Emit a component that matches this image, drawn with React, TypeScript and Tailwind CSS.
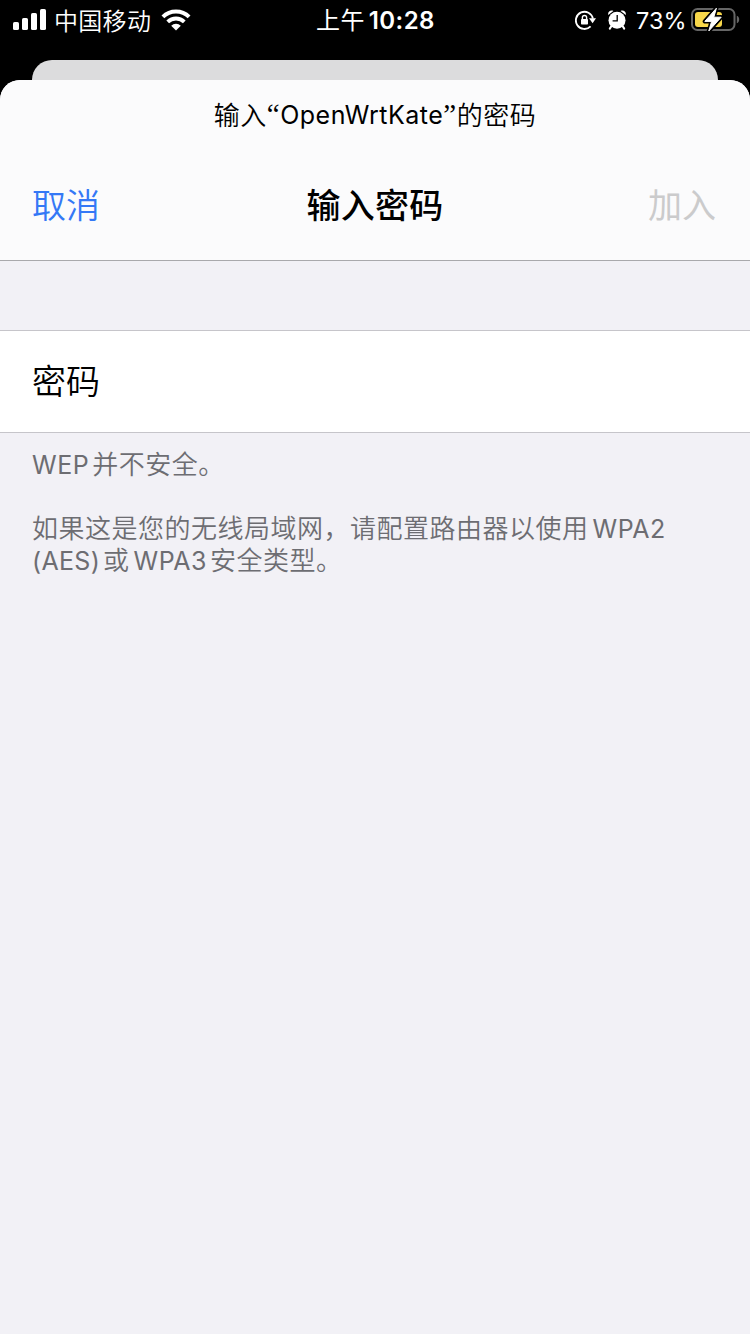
import type { ReactNode } from "react";

const cjk = "font-['Noto_Sans_CJK_SC',sans-serif]";
const latin = "font-['Inter','Noto_Sans_CJK_SC',sans-serif]";

function Latin({ className = "", children }: { className?: string; children: ReactNode }) {
  return <span className={`${latin} ${className}`}>{children}</span>;
}

function SignalBars() {
  return (
    <svg className="ml-[13px] block h-[22px] w-[33px] shrink-0" viewBox="0 0 33 22" fill="#fff">
      <rect x="0" y="13" width="6" height="8" rx="1.6" />
      <rect x="9" y="9" width="6" height="12" rx="1.6" />
      <rect x="18" y="4" width="6" height="17" rx="1.6" />
      <rect x="27" y="0" width="6" height="21" rx="1.6" />
    </svg>
  );
}

function WifiIcon() {
  return (
    <svg className="ml-[10px] block h-[22px] w-[30px] shrink-0" viewBox="0 0 30 22" fill="none">
      <path d="M1.9 7.9a18.6 18.6 0 0 1 26.2 0" stroke="#fff" strokeWidth="4" />
      <path d="M6.7 12.9a11.8 11.8 0 0 1 16.6 0" stroke="#fff" strokeWidth="3.8" />
      <path d="M10.2 16.8a6.8 6.8 0 0 1 9.6 0L15 21.6z" fill="#fff" />
    </svg>
  );
}

function RotationLockIcon() {
  return (
    <svg className="block h-[20px] w-[21px] shrink-0" viewBox="0 0 21 20" fill="none">
      <path d="M15.6 16.4A8.6 8.6 0 1 1 17.9 8.6" stroke="#fff" strokeWidth="1.9" />
      <path d="M14 8.2h7l-3.4 5z" fill="#fff" />
      <rect x="6" y="9" width="7" height="5.6" rx="0.8" fill="#fff" />
      <path d="M7.4 9.2V7.6a2.1 2.1 0 0 1 4.2 0v1.6" stroke="#fff" strokeWidth="1.4" />
    </svg>
  );
}

function AlarmIcon() {
  return (
    <svg className="ml-[12px] block h-[20px] w-[18px] shrink-0" viewBox="0 0 18 20">
      <circle cx="9" cy="10.3" r="8.5" fill="#fff" />
      <path d="M0.2 4.9C-0.4 1.6 2.6-0.3 5.4 0.9zM17.8 4.9C18.4 1.6 15.4-0.3 12.6 0.9z" fill="#fff" />
      <path d="M3.2 16.4 1.8 18.6M14.8 16.4 16.2 18.6" stroke="#fff" strokeWidth="2" strokeLinecap="round" />
      <path d="M9.2 5v5.8H4.6" stroke="#000" strokeWidth="1.3" fill="none" />
    </svg>
  );
}

function BatteryIcon() {
  return (
    <svg className="ml-[5px] block h-[26px] w-[49px] shrink-0" viewBox="0 0 49 26">
      <rect x="1" y="2" width="42.5" height="21" rx="5.5" fill="none" stroke="#666" strokeWidth="2" />
      <path d="M45.8 8.7c3.2 1.1 3.2 6.4 0 7.5z" fill="#666" />
      <rect x="4" y="5" width="27" height="15" rx="3" fill="#f8d74a" />
      <path
        d="M25.4 1.2 13.8 14.4h6.8L17.8 24 30.2 10.2h-7.4z"
        fill="#000"
        stroke="#000"
        strokeWidth="4.2"
        strokeLinejoin="round"
      />
      <path
        d="M25.4 1.2 13.8 14.4h6.8L17.8 24 30.2 10.2h-7.4z"
        fill="#fff"
        stroke="#fff"
        strokeWidth="1"
        strokeLinejoin="round"
      />
    </svg>
  );
}

function StatusBar() {
  return (
    <div className="grid h-[60px] grid-cols-[316px_1fr_175px] items-start text-white">
      <div className="flex h-[40px] items-center">
        <SignalBars />
        <span className={`ml-[8px] text-[24px] leading-[38px] font-[350] tracking-[0.3px] ${cjk}`}>中国移动</span>
        <WifiIcon />
      </div>
      <div className="flex h-[40px] items-center whitespace-nowrap leading-[40px]">
        <span className={`-mt-[2px] text-[24px] tracking-[0.4px] ${cjk}`}>上午</span>
        <Latin className="ml-[4px] mt-px text-[24px] font-semibold tracking-[0.4px]">10:28</Latin>
      </div>
      <div className="flex h-[40px] items-center">
        <RotationLockIcon />
        <AlarmIcon />
        <Latin className="ml-[10px] mt-[2px] w-[50px] text-[23.5px] leading-[40px] whitespace-nowrap">73%</Latin>
        <BatteryIcon />
      </div>
    </div>
  );
}

function SheetHeader() {
  return (
    <header className="h-[181px] rounded-t-[20px] border-b border-[#a9a9ac] bg-[#fbfbfc] text-black">
      <p className="flex h-[70px] items-center justify-center text-[26px] leading-[40px] whitespace-nowrap">
        <span className={`-mt-[2px] font-[350] tracking-[0.5px] ${cjk}`}>输入</span>
        <span className="-mt-[2px] font-['Liberation_Serif',serif] text-[29px] tracking-[0.5px]">“</span>
        <Latin className="text-[25px] tracking-[0.5px]">OpenWrtKate</Latin>
        <span className="-mt-[2px] font-['Liberation_Serif',serif] text-[29px] tracking-[0.5px]">”</span>
        <span className={`-mt-[2px] font-[350] tracking-[0.5px] ${cjk}`}>的密码</span>
      </p>
      <div className={`-mt-px grid h-[110px] grid-cols-3 items-center pr-[34px] pl-8 text-[34px] ${cjk}`}>
        <button className="text-left font-[350] leading-[50px] text-[#3478f6]">取消</button>
        <h1 className="pl-[2px] text-center font-medium leading-[50px] tracking-[0.2px]">输入密码</h1>
        <button className="text-right leading-[50px] text-[#cbcbcc]">加入</button>
      </div>
    </header>
  );
}

export default function App() {
  return (
    <div className="flex h-[1334px] w-[750px] flex-col overflow-hidden bg-black">
      <StatusBar />
      <div className="mx-8 h-[40px] shrink-0 rounded-t-[20px] bg-[#dcdcdd]" />
      <main className="-mt-5 flex-1 rounded-t-[20px] bg-[#f2f1f6]">
        <SheetHeader />
        <label
          className={`mt-[69px] flex h-[103px] items-center border-y border-[#c6c5ca] bg-white px-8 pb-[4px] text-[34px] leading-[50px] font-[350] text-black ${cjk}`}
        >
          密码
        </label>
        <div className={`pt-[14px] pl-8 text-[26px] leading-[32px] font-[350] tracking-[0.5px] whitespace-nowrap text-[#6d6d72] ${cjk}`}>
          <p>
            <Latin className="text-[25px] leading-none font-normal">WEP</Latin>
            <span className="ml-[3px]">并不安全。</span>
          </p>
          <p className="mt-8">
            <span>如果这是您的无线局域网，请配置路由器以使用</span>
            <Latin className="ml-1 text-[25px] leading-none font-normal">WPA2</Latin>
            <br />
            <Latin className="text-[25px] leading-none font-normal tracking-[0.3px]">(AES)</Latin>
            <span className="ml-[3px]">或</span>
            <Latin className="ml-1 text-[25px] leading-none font-normal">WPA3</Latin>
            <span className="ml-[3px]">安全类型。</span>
          </p>
        </div>
      </main>
    </div>
  );
}
